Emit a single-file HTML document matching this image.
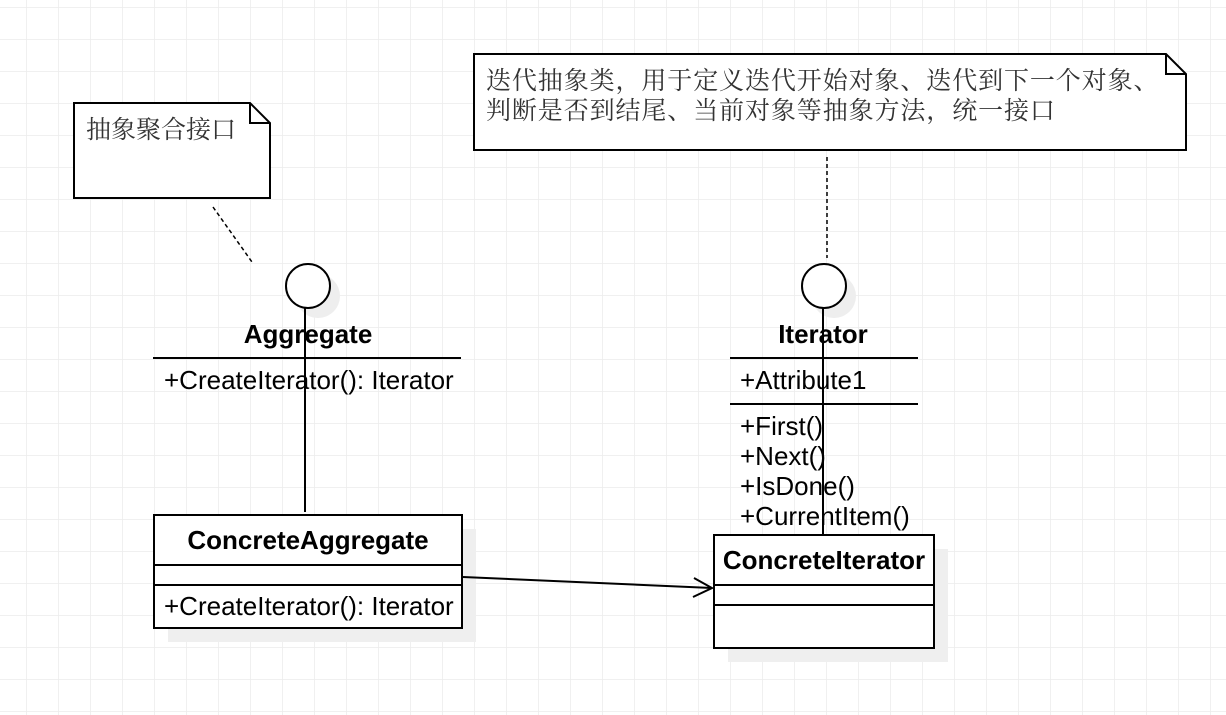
<!DOCTYPE html>
<html><head><meta charset="utf-8"><style>
html,body{margin:0;padding:0;background:#fff;overflow:hidden}
svg{display:block}
.t{font-family:"Liberation Sans",sans-serif;font-size:26px;fill:#000}
.b{font-weight:bold;text-anchor:middle;font-size:26px}
.c{font-family:"Liberation Serif","Noto Serif CJK SC",serif;font-size:25px;fill:#333}
</style></head><body>
<svg width="1226" height="715" xmlns="http://www.w3.org/2000/svg">
<defs><pattern id="g" x="26" y="7" width="32" height="32" patternUnits="userSpaceOnUse">
<path d="M0 0H32M0 0V32" stroke="#ececec" stroke-width="1.5" fill="none"/></pattern></defs>
<rect width="1226" height="715" fill="url(#g)"/>
<g stroke="#000" stroke-width="2" fill="#fff">
<path d="M74 103H250L270 123V198H74Z"/>
<path d="M250 103V123H270" fill="none"/>
<path d="M474 54H1166L1186 74V150H474Z"/>
<path d="M1166 54V74H1186" fill="none"/>
</g>
<text class="c" x="86" y="138">抽象聚合接口</text>
<text class="c" x="486" y="89" letter-spacing="0.9">迭代抽象类，用于定义迭代开始对象、迭代到下一个对象、</text>
<text class="c" x="486" y="119" letter-spacing="0.9">判断是否到结尾、当前对象等抽象方法，统一接口</text>
<g stroke="#000" stroke-width="1.5" stroke-dasharray="4 3" fill="none">
<path d="M213 207L252 262"/>
<path d="M827 157V258"/>
</g>
<circle cx="318" cy="296" r="22" fill="#eee"/>
<circle cx="834" cy="296" r="22" fill="#eee"/>
<rect x="168" y="529" width="308" height="113" fill="#efefef"/>
<rect x="728" y="549" width="220" height="113" fill="#efefef"/>
<g stroke="#000" stroke-width="2" fill="#fff">
<circle cx="308" cy="286" r="22"/>
<circle cx="824" cy="286" r="22"/>
<rect x="154" y="515" width="308" height="113"/>
<rect x="714" y="535" width="220" height="113"/>
</g>
<g stroke="#000" stroke-width="2" fill="none">
<path d="M153 358H461"/>
<path d="M730 358H918M730 404H918"/>
<path d="M154 565H462M154 585H462"/>
<path d="M714 585H934M714 605H934"/>
<path d="M305 308V512"/>
<path d="M823 308V534"/>
<path d="M463 577L712 588M694 578L712 588L693 597"/>
</g>
<text class="t b" x="308" y="343">Aggregate</text>
<text class="t" x="164" y="389">+CreateIterator(): Iterator</text>
<text class="t b" x="308" y="549">ConcreteAggregate</text>
<text class="t" x="164" y="615">+CreateIterator(): Iterator</text>
<text class="t b" x="823" y="343">Iterator</text>
<text class="t" x="740" y="389">+Attribute1</text>
<text class="t" x="740" y="435">+First()</text>
<text class="t" x="740" y="465">+Next()</text>
<text class="t" x="740" y="495">+IsDone()</text>
<text class="t" x="740" y="525">+CurrentItem()</text>
<text class="t b" x="824" y="569">ConcreteIterator</text>
</svg>
</body></html>
